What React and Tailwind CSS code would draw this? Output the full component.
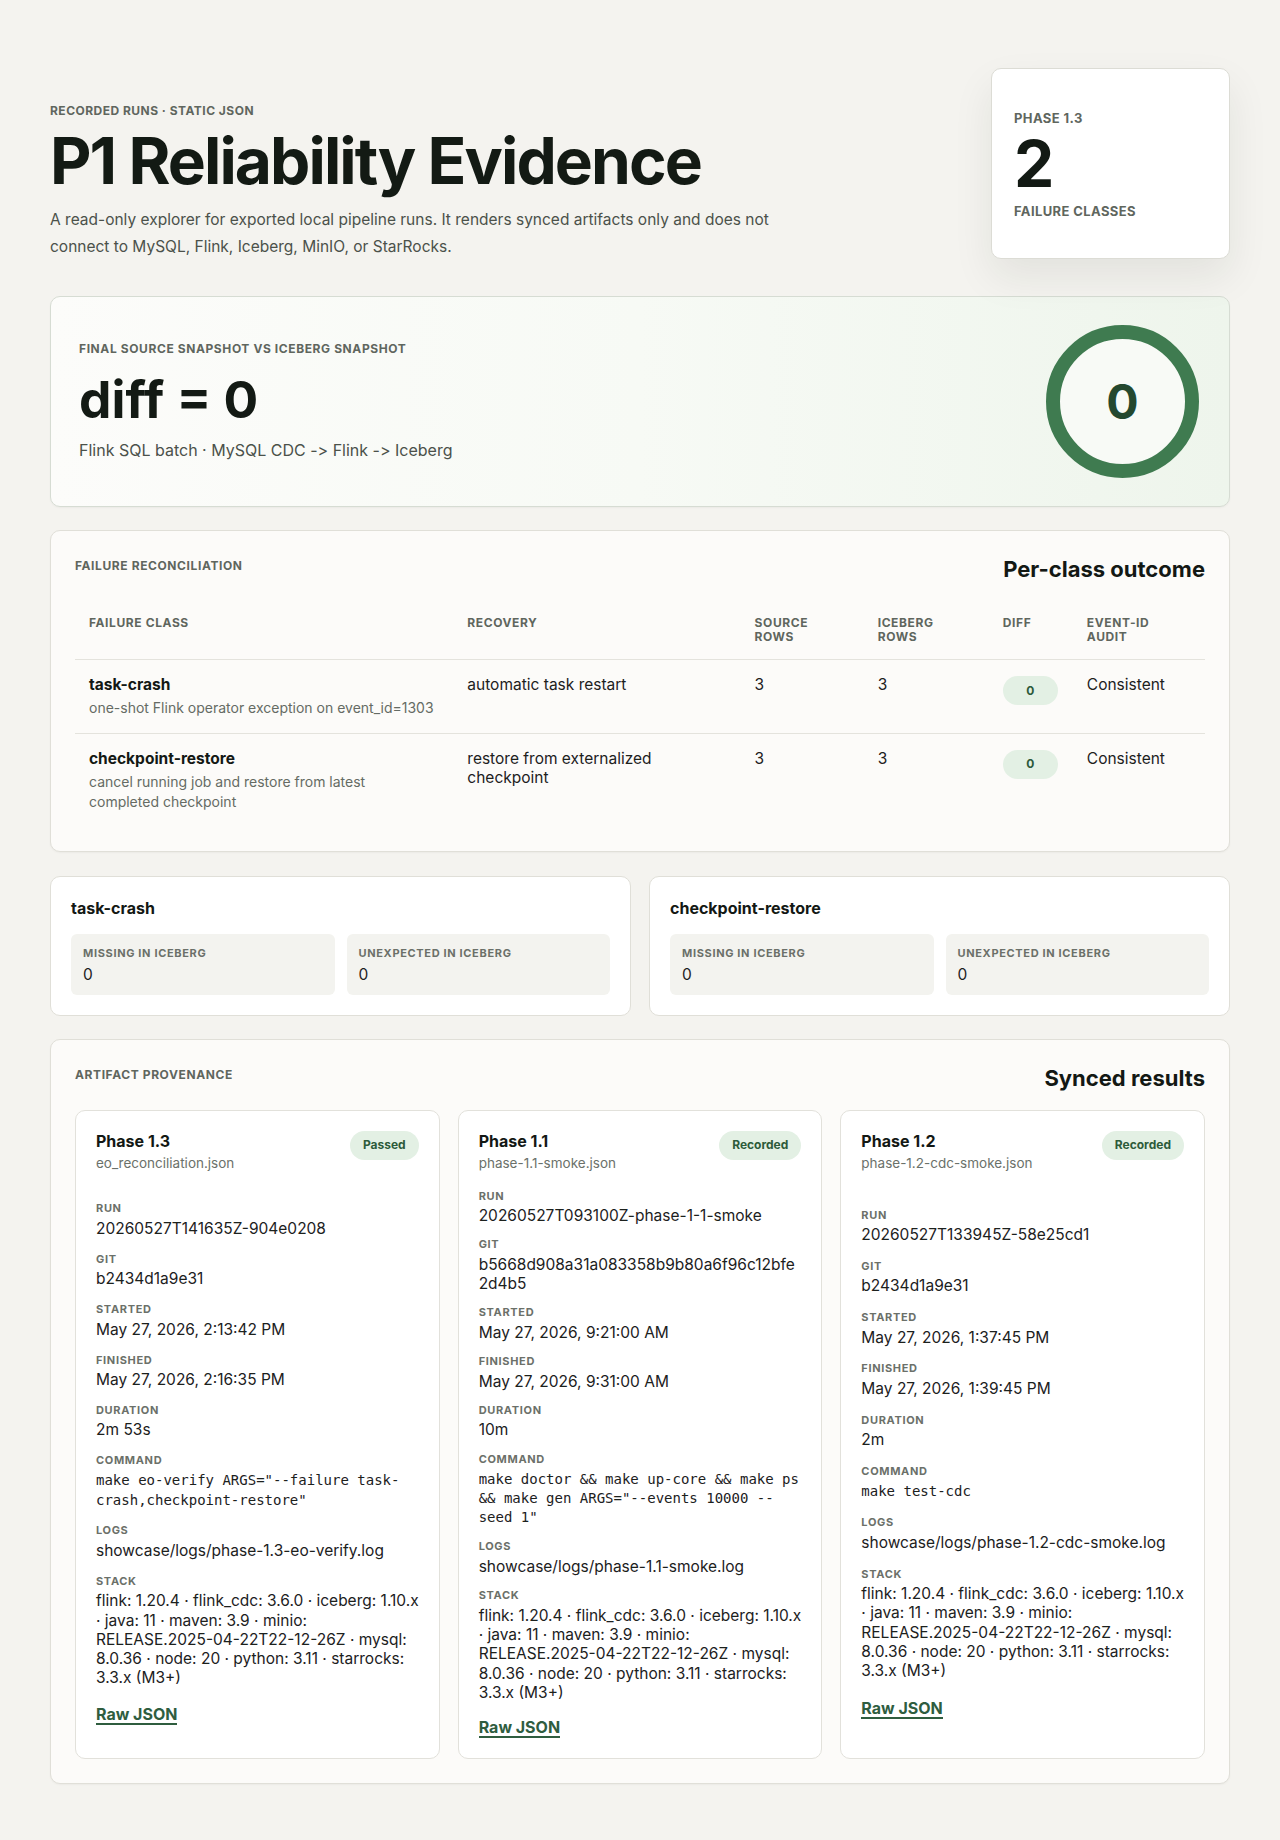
import React from 'react';

const failures = [
  {
    name: 'task-crash',
    detail: 'one-shot Flink operator exception on event_id=1303',
    recovery: 'automatic task restart',
    sourceRows: 3,
    icebergRows: 3,
    diff: 0,
    audit: 'Consistent',
  },
  {
    name: 'checkpoint-restore',
    detail: 'cancel running job and restore from latest completed checkpoint',
    recovery: 'restore from externalized checkpoint',
    sourceRows: 3,
    icebergRows: 3,
    diff: 0,
    audit: 'Consistent',
  },
];

// Version tokens; the minio release tag must not break at its hyphens
const stackParts = [
  'flink: 1.20.4',
  'flink_cdc: 3.6.0',
  'iceberg: 1.10.x',
  'java: 11',
  'maven: 3.9',
  'minio: RELEASE.2025-04-22T22-12-26Z',
  'mysql: 8.0.36',
  'node: 20',
  'python: 3.11',
  'starrocks: 3.3.x (M3+)',
];

function StackText() {
  return stackParts.map((part, i) => {
    const [key, ...rest] = part.split(': ');
    return (
      <React.Fragment key={part}>
        {i > 0 && ' · '}
        {key}: <span className="whitespace-nowrap">{rest.join(': ')}</span>
      </React.Fragment>
    );
  });
}

const runs = [
  {
    phase: 'Phase 1.3',
    file: 'eo_reconciliation.json',
    status: 'Passed',
    run: '20260527T141635Z-904e0208',
    git: 'b2434d1a9e31',
    started: 'May 27, 2026, 2:13:42 PM',
    finished: 'May 27, 2026, 2:16:35 PM',
    duration: '2m 53s',
    command: 'make eo-verify ARGS="--failure task-crash,checkpoint-restore"',
    logs: 'showcase/logs/phase-1.3-eo-verify.log',
  },
  {
    phase: 'Phase 1.1',
    file: 'phase-1.1-smoke.json',
    status: 'Recorded',
    run: '20260527T093100Z-phase-1-1-smoke',
    git: 'b5668d908a31a083358b9b80a6f96c12bfe2d4b5',
    started: 'May 27, 2026, 9:21:00 AM',
    finished: 'May 27, 2026, 9:31:00 AM',
    duration: '10m',
    command: 'make doctor && make up-core && make ps && make gen ARGS="--events 10000 --seed 1"',
    logs: 'showcase/logs/phase-1.1-smoke.log',
  },
  {
    phase: 'Phase 1.2',
    file: 'phase-1.2-cdc-smoke.json',
    status: 'Recorded',
    run: '20260527T133945Z-58e25cd1',
    git: 'b2434d1a9e31',
    started: 'May 27, 2026, 1:37:45 PM',
    finished: 'May 27, 2026, 1:39:45 PM',
    duration: '2m',
    command: 'make test-cdc',
    logs: 'showcase/logs/phase-1.2-cdc-smoke.log',
  },
];

const columns = [
  { label: 'Failure class', col: 'w-[378px]', wrap: '' },
  { label: 'Recovery', col: 'w-[287px]', wrap: '' },
  { label: 'Source rows', col: 'w-[123px]', wrap: 'max-w-[64px]' },
  { label: 'Iceberg rows', col: 'w-[125px]', wrap: 'max-w-[64px]' },
  { label: 'Diff', col: 'w-[84px]', wrap: 'max-w-[64px]' },
  { label: 'Event-id audit', col: 'w-[132px]', wrap: 'max-w-[64px]' },
];

const sectionLabel = 'text-[12px] font-bold uppercase leading-4 tracking-[0.05em] text-[#5f665e]';
const fieldLabel = 'text-[11px] font-bold uppercase leading-[14px] tracking-[0.06em] text-[#6b7069]';
const cell = 'px-[14px] pb-[15px] pt-4 align-top';

function Field({ label, children, mono }) {
  return (
    <div>
      <dt className={fieldLabel}>{label}</dt>
      <dd
        className={
          mono
            ? 'mt-[4px] font-["DejaVu_Sans_Mono",monospace] text-[14px] leading-[19.2px] text-[#1c211d]'
            : 'mt-[3.5px] text-[15.5px] leading-[19.3px] text-[#1c211d] [overflow-wrap:anywhere]'
        }
      >
        {children}
      </dd>
    </div>
  );
}

function RunCard({ run }) {
  return (
    <article className="grid gap-4 rounded-[10px] border border-[#e2e1db] bg-white p-5">
      <header className="flex items-start justify-between gap-3">
        <div>
          <h3 className="text-[16px] font-bold leading-5 text-[#131814]">{run.phase}</h3>
          <p className="mt-0.5 text-[13.5px] leading-5 text-[#6b716a]">{run.file}</p>
        </div>
        <span className="inline-flex h-[29px] items-center rounded-full bg-[#e3f0e4] px-[13px] text-[12px] font-bold text-[#2d5b3a]">
          {run.status}
        </span>
      </header>

      <dl className="grid gap-y-3">
        <Field label="Run">{run.run}</Field>
        <Field label="Git">{run.git}</Field>
        <Field label="Started">{run.started}</Field>
        <Field label="Finished">{run.finished}</Field>
        <Field label="Duration">{run.duration}</Field>
        <Field label="Command" mono>{run.command}</Field>
        <Field label="Logs">{run.logs}</Field>
        <Field label="Stack">
          <StackText />
        </Field>
      </dl>

      <a
        href="#"
        className="self-start justify-self-start border-b-2 border-[#2f5d3f] text-[16px] font-bold leading-[18px] text-[#2f5d3f]"
      >
        Raw JSON
      </a>
    </article>
  );
}

function SectionHead({ label, title }) {
  return (
    <div className="mb-[18px] flex items-start justify-between">
      <p className={`${sectionLabel} pt-[3px]`}>{label}</p>
      <h2 className="text-[22px] font-bold leading-7 text-[#131814]">{title}</h2>
    </div>
  );
}

export default function App() {
  return (
    <div className="min-h-screen bg-[#f4f3ef] font-['Inter','Liberation_Sans',sans-serif] text-[#1c211d] antialiased">
      <main className="mx-auto max-w-[1180px] pb-14 pt-[68px]">
        {/* Page header */}
        <div className="flex items-start justify-between">
          <div className="pt-[35px]">
            <p className="text-[12px] font-bold uppercase leading-4 tracking-[0.04em] text-[#5f665e]">
              Recorded runs · static JSON
            </p>
            <h1 className="mt-[10px] text-[64px] font-bold leading-none tracking-[-0.03em] text-[#131a14]">
              P1 Reliability Evidence
            </h1>
            <p className="mt-[13px] max-w-[740px] text-[15.5px] leading-[27px] text-[#4b514a]">
              A read-only explorer for exported local pipeline runs. It renders synced artifacts only and does not
              connect to MySQL, Flink, Iceberg, MinIO, or StarRocks.
            </p>
          </div>

          <div className="w-[239px] rounded-[10px] border border-[#dcdcd5] bg-white px-[22px] pb-[39px] pt-[41px] shadow-[0_18px_40px_rgba(30,35,25,0.08)]">
            <p className="text-[13px] font-bold uppercase leading-4 tracking-[0.03em] text-[#5f665e]">Phase 1.3</p>
            <p className="mt-[6px] text-[64px] font-bold leading-none text-[#131a14]">2</p>
            <p className="mt-[7px] text-[13px] font-bold uppercase leading-4 tracking-[0.03em] text-[#5f665e]">
              Failure classes
            </p>
          </div>
        </div>

        {/* Snapshot diff */}
        <section className="mt-9 flex items-center justify-between rounded-[10px] border border-[#d6dcd3] bg-linear-to-r from-[#fcfcfa] via-[#f7faf5] to-[#eef5ec] p-[28px] shadow-[0_1px_2px_rgba(0,0,0,0.04)]">
          <div>
            <p className={sectionLabel}>Final source snapshot vs Iceberg snapshot</p>
            <p className="mt-[17px] text-[51.5px] font-bold leading-none text-[#131a14]">diff = 0</p>
            <p className="mt-[12px] text-[16px] leading-6 text-[#4b514a] [font-variant-ligatures:no-contextual]">
              Flink SQL batch · MySQL CDC -&gt; Flink -&gt; Iceberg
            </p>
          </div>
          <div className="mr-[2px] flex h-[153px] w-[153px] items-center justify-center rounded-full border-[14px] border-[#3f7b50] bg-[#f8faf6]">
            <span className="text-[48px] font-bold leading-none text-[#24482f]">0</span>
          </div>
        </section>

        {/* Failure reconciliation table */}
        <section className="mt-[23px] rounded-[10px] border border-[#e0dfd8] bg-[#fcfbf9] px-6 pb-6 pt-6 shadow-[0_1px_2px_rgba(0,0,0,0.04)]">
          <SectionHead label="Failure reconciliation" title="Per-class outcome" />
          <table className="w-full table-fixed border-collapse text-left">
            <colgroup>
              {columns.map((c) => (
                <col key={c.label} className={c.col} />
              ))}
            </colgroup>
            <thead>
              <tr className="border-b border-[#e4e3dd]">
                {columns.map((c) => (
                  <th
                    key={c.label}
                    className="px-[14px] pb-[15px] pt-[15px] align-top text-[12px] font-bold uppercase leading-[14px] tracking-[0.05em] text-[#5f665e]"
                  >
                    <span className={`block ${c.wrap}`}>{c.label}</span>
                  </th>
                ))}
              </tr>
            </thead>
            <tbody>
              {failures.map((f, i) => (
                <tr key={f.name} className={i < failures.length - 1 ? 'border-b border-[#e4e3dd]' : ''}>
                  <td className={cell}>
                    <p className="text-[15.5px] font-bold leading-[18.75px] text-[#131814]">{f.name}</p>
                    <p className="mt-[3px] text-[14px] leading-5 text-[#656b64] text-pretty">{f.detail}</p>
                  </td>
                  <td className={`${cell} text-[15.5px] leading-[18.75px]`}>{f.recovery}</td>
                  <td className={`${cell} text-[15.5px] leading-[18.75px]`}>{f.sourceRows}</td>
                  <td className={`${cell} text-[15.5px] leading-[18.75px]`}>{f.icebergRows}</td>
                  <td className={cell}>
                    <span className="inline-flex h-[29px] w-[55px] items-center justify-center rounded-full bg-[#e3f0e4] text-[12px] font-bold text-[#2d5b3a]">
                      {f.diff}
                    </span>
                  </td>
                  <td className={`${cell} text-[15.5px] leading-[18.75px]`}>{f.audit}</td>
                </tr>
              ))}
            </tbody>
          </table>
        </section>

        {/* Missing / unexpected ids per class */}
        <div className="mt-6 grid grid-cols-2 gap-[18px]">
          {failures.map((f) => (
            <div key={f.name} className="rounded-[10px] border border-[#e0dfd8] bg-white px-5 pb-5 pt-5">
              <h3 className="text-[16px] font-bold leading-[22px] text-[#131814]">{f.name}</h3>
              <div className="mt-[15px] grid grid-cols-2 gap-3">
                {['Missing in Iceberg', 'Unexpected in Iceberg'].map((k) => (
                  <div key={k} className="rounded-[6px] bg-[#f3f3ef] px-3 pb-[10px] pt-3">
                    <p className={fieldLabel}>{k}</p>
                    <p className="mt-1 text-[15.5px] leading-[21px]">0</p>
                  </div>
                ))}
              </div>
            </div>
          ))}
        </div>

        {/* Artifact provenance */}
        <section className="mt-[23px] rounded-[10px] border border-[#e0dfd8] bg-[#fcfbf9] p-6 shadow-[0_1px_2px_rgba(0,0,0,0.04)]">
          <SectionHead label="Artifact provenance" title="Synced results" />
          <div className="grid grid-cols-3 gap-[18px]">
            {runs.map((r) => (
              <RunCard key={r.phase} run={r} />
            ))}
          </div>
        </section>
      </main>
    </div>
  );
}
